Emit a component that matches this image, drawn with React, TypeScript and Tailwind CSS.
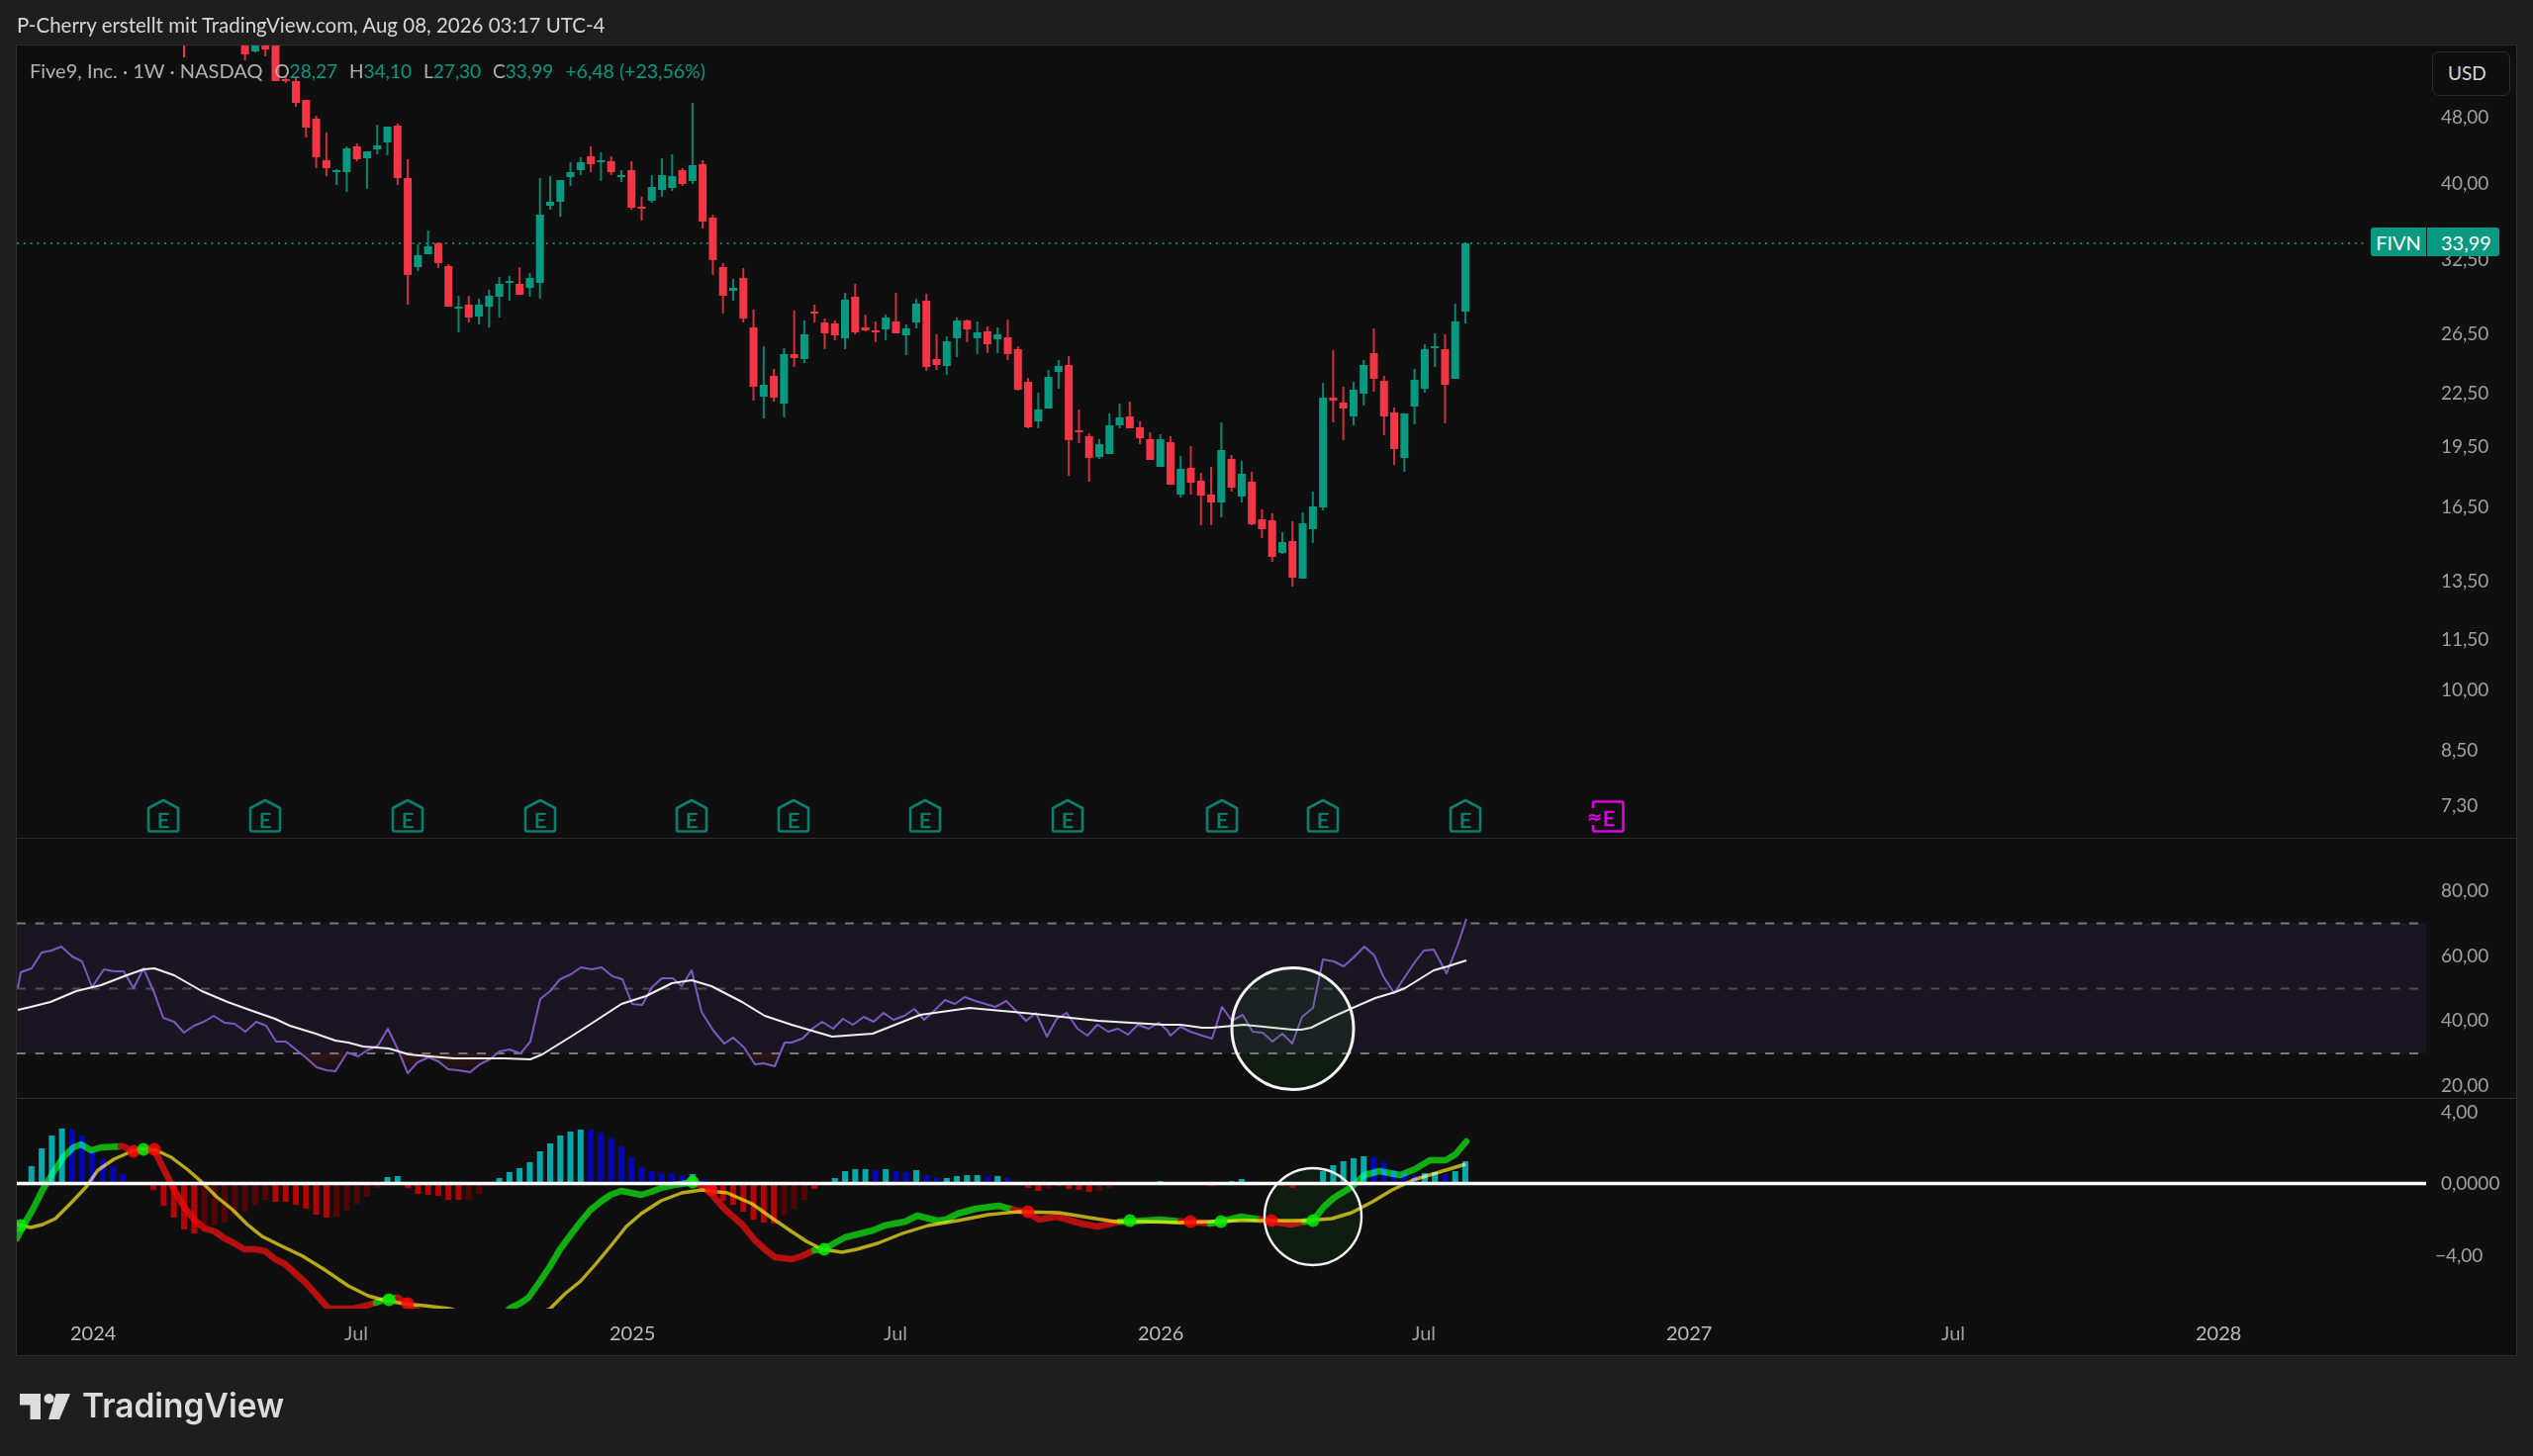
import React from 'react';

// candle x position, k = weeks back from the last bar
const barX = (k: number) => 1481 - 10.278 * k;

type Candle = [number, number, number, number, 'g' | 'r']; // high, body top, body bottom, low

const candles: Candle[] = [
  [245, 246, 315, 327, 'g'], [307, 325, 383, 383, 'g'], [338, 353, 389, 428, 'r'], [337, 350, 352, 371, 'g'],
  [348, 353, 393, 397, 'g'], [373, 384, 411, 429, 'g'], [418, 418, 463, 477, 'g'], [412, 417, 454, 470, 'r'],
  [380, 385, 421, 440, 'r'], [332, 357, 383, 396, 'r'], [364, 369, 398, 410, 'g'], [386, 394, 421, 430, 'g'],
  [391, 407, 413, 445, 'r'], [354, 402, 405, 427, 'r'], [387, 402, 513, 516, 'g'], [497, 512, 535, 549, 'g'],
  [518, 529, 585, 585, 'g'], [527, 547, 584, 593, 'r'], [538, 548, 559, 560, 'g'], [519, 526, 563, 568, 'r'],
  [515, 525, 535, 544, 'r'], [477, 487, 530, 531, 'r'], [466, 479, 502, 508, 'g'], [460, 464, 493, 497, 'r'],
  [427, 455, 508, 523, 'g'], [472, 500, 508, 531, 'r'], [478, 486, 501, 531, 'r'], [451, 473, 488, 500, 'r'],
  [461, 474, 500, 503, 'g'], [441, 447, 490, 490, 'r'], [439, 444, 472, 472, 'g'], [437, 444, 465, 465, 'r'],
  [426, 432, 443, 449, 'r'], [406, 421, 433, 433, 'r'], [408, 422, 430, 433, 'g'], [418, 430, 459, 459, 'g'],
  [444, 449, 462, 464, 'g'], [438, 441, 463, 487, 'r'], [414, 435, 437, 448, 'r'], [360, 369, 445, 481, 'r'],
  [364, 370, 376, 393, 'g'], [374, 381, 413, 413, 'g'], [397, 414, 426, 433, 'g'], [382, 386, 432, 433, 'r'],
  [350, 353, 394, 395, 'r'], [323, 341, 358, 364, 'r'], [331, 338, 343, 357, 'g'], [330, 335, 348, 357, 'r'],
  [325, 336, 342, 358, 'g'], [323, 324, 333, 346, 'r'], [321, 324, 342, 361, 'g'], [340, 345, 370, 379, 'g'],
  [338, 363, 369, 374, 'r'], [297, 304, 371, 375, 'r'], [302, 307, 326, 332, 'g'], [328, 332, 339, 359, 'g'],
  [296, 325, 337, 337, 'r'], [318, 321, 333, 344, 'g'], [325, 334, 335, 346, 'r'], [318, 331, 334, 335, 'r'],
  [287, 300, 336, 338, 'r'], [296, 303, 342, 353, 'g'], [324, 327, 339, 344, 'r'], [322, 326, 337, 353, 'r'],
  [308, 315, 317, 326, 'r'], [324, 338, 363, 367, 'g'], [314, 358, 362, 371, 'r'], [352, 358, 408, 422, 'g'],
  [373, 380, 402, 406, 'r'], [350, 389, 401, 423, 'g'], [313, 331, 391, 405, 'r'], [271, 281, 322, 326, 'r'],
  [282, 291, 294, 304, 'g'], [266, 270, 299, 317, 'r'], [217, 220, 263, 278, 'r'], [162, 166, 224, 231, 'r'],
  [104, 167, 183, 186, 'g'], [170, 172, 186, 188, 'r'], [156, 178, 190, 193, 'g'], [160, 177, 192, 199, 'g'],
  [177, 189, 203, 205, 'g'], [199, 209, 210, 223, 'r'], [163, 172, 210, 212, 'r'], [172, 177, 179, 184, 'g'],
  [158, 163, 174, 177, 'r'], [154, 162, 163, 183, 'g'], [148, 158, 166, 174, 'r'], [159, 164, 172, 177, 'g'],
  [164, 174, 179, 188, 'g'], [182, 182, 204, 219, 'g'], [178, 204, 208, 212, 'g'], [180, 217, 286, 302, 'g'],
  [276, 281, 291, 300, 'g'], [270, 287, 298, 298, 'r'], [279, 284, 285, 304, 'g'], [280, 287, 300, 321, 'g'],
  [293, 299, 310, 331, 'g'], [302, 308, 320, 328, 'g'], [299, 308, 321, 326, 'r'], [299, 310, 312, 336, 'g'],
  [267, 269, 310, 310, 'r'], [245, 246, 266, 271, 'r'], [233, 249, 257, 257, 'g'], [247, 258, 270, 274, 'g'],
  [161, 180, 278, 308, 'r'], [125, 127, 180, 187, 'r'], [128, 128, 144, 157, 'g'], [126, 147, 151, 156, 'g'],
  [153, 153, 160, 191, 'g'], [145, 148, 161, 163, 'r'], [148, 150, 174, 194, 'g'], [171, 172, 173, 187, 'g'],
  [134, 162, 170, 178, 'r'], [117, 120, 159, 170, 'r'], [101, 101, 129, 139, 'r'], [77, 82, 104, 108, 'r'],
  [77, 80, 81, 84, 'r'], [44, 44, 82, 82, 'r'], [44, 44, 50, 57, 'r'], [44, 44, 52, 53, 'g'], [44, 44, 55, 61, 'r'],
];

const priceTicks: [string, number][] = [
  ['48,00', 117], ['40,00', 184], ['32,50', 261], ['26,50', 336], ['22,50', 396], ['19,50', 450],
  ['16,50', 511], ['13,50', 586], ['11,50', 645], ['10,00', 696], ['8,50', 757], ['7,30', 813],
];

const earnings = [165, 268, 412, 546, 699, 802, 935, 1079, 1235, 1337, 1481];

const rsi =
  '18,999 21,983 32,979 42,963 52,961 62,957 73,967 83,972 93,998 105,980 115,982 125,982 135,999 145,979 156,1004 165,1029 176,1033 186,1044 196,1037 206,1033 216,1027 227,1034 237,1035 248,1043 259,1033 269,1037 279,1053 289,1053 299,1061 310,1070 320,1079 330,1082 339,1083 351,1064 362,1068 371,1062 382,1057 392,1040 403,1063 412,1085 422,1074 433,1069 443,1073 453,1081 463,1082 475,1084 485,1076 495,1071 505,1063 515,1061 526,1065 536,1053 546,1010 556,1002 566,990 577,985 587,978 598,980 608,978 619,987 629,990 639,1015 649,1016 659,998 669,989 680,989 689,997 699,981 709,1023 721,1042 732,1055 741,1049 752,1059 763,1076 772,1075 783,1078 793,1054 800,1054 811,1050 821,1040 831,1033 842,1040 852,1030 862,1036 873,1028 883,1033 893,1024 903,1031 914,1027 924,1020 934,1031 944,1022 955,1011 965,1015 975,1008 986,1012 996,1015 1006,1018 1017,1012 1027,1022 1037,1032 1047,1024 1058,1048 1068,1030 1078,1024 1089,1040 1099,1047 1109,1036 1120,1043 1130,1040 1140,1046 1150,1036 1161,1040 1171,1034 1180,1042 1183,1047 1193,1038 1203,1043 1215,1047 1225,1050 1235,1018 1245,1032 1256,1026 1266,1043 1276,1044 1286,1053 1296,1045 1306,1055 1316,1028 1327,1019 1337,970 1348,972 1358,977 1368,968 1379,957 1389,966 1398,987 1409,1004 1419,989 1429,974 1439,961 1449,960 1462,984 1473,956 1482,929';

const rsiMa =
  '18,1021 31,1018 51,1013 77,1002 102,996 128,986 145,980 156,979 176,986 204,1002 230,1013 255,1022 278,1030 293,1037 319,1045 339,1052 352,1054 367,1058 393,1060 413,1066 434,1068 459,1070 485,1070 510,1070 536,1071 548,1066 577,1048 602,1032 628,1015 653,1007 679,994 699,991 719,997 750,1013 773,1027 800,1036 841,1048 882,1045 930,1026 980,1019 1045,1025 1110,1032 1176,1036 1193,1036 1215,1039 1225,1039 1257,1036 1287,1039 1307,1041 1315,1041 1325,1039 1347,1028 1367,1019 1390,1009 1410,1003 1420,999 1449,981 1463,977 1482,971';

// part of the RSI under the 30 line
const rsiLowFills = [
  '304,1065 310,1070 320,1079 330,1082 339,1083 348,1065',
  '403,1065 412,1085 422,1074 433,1069 443,1073 453,1081 463,1082 475,1084 485,1076 495,1071 503,1065',
  '752,1065 763,1076 772,1075 783,1078 789,1065',
];

type Bar = [number, number, 'T' | 'B' | 'R' | 'D'];

const histValues: [number, string][] = [
  [141, '1179T 1161T 1148T 1141T 1142B 1148B 1164B 1172B 1179B 1187B'],
  [129, '1203R 1219R 1231R 1243R 1247R 1245D 1239D 1236D 1229D 1225D 1218D 1213D 1215R 1215R 1218R 1222R 1228R 1231R 1230D 1224D 1217D 1210D 1201D 1190T 1189T 1201R 1207R 1208R 1209R 1213R 1213R 1213D 1207D 1199D 1191T 1185T 1181T 1175T 1164T 1156T 1148T 1144T 1142T 1142B 1145B 1151B 1159B 1170B 1180B 1184B 1186B 1186B 1188B 1187T 1193B 1207R 1214R 1218R 1225R 1233R 1236R 1237R 1229D 1222D 1213D 1202R'],
  [62, '1191T 1184T 1182T 1182T 1183B 1182T 1184B 1185B 1183T 1188B 1191B 1191T 1189T 1188T 1188T 1189B 1189T 1191B'],
  [43, '1201R 1204R 1202D 1199R 1202R 1203R 1205R 1204D 1201D'],
  [30, '1194T'],
  [25, '1199R'],
  [23, '1194T 1192T 1194B'],
  [18, '1199R 1201R'],
  [14, '1184T 1178T 1174T 1171T 1169T 1170B 1175B 1183B 1186B 1188B 1186T 1185T 1187B 1184T 1174T'],
];

const histBars: Bar[] = histValues.flatMap(([start, list]) =>
  list.split(' ').map((v, i): Bar => [start - i, parseInt(v, 10), v.slice(-1) as Bar[2]])
);

const histColors = { T: 'fill-[#05a8ab]', B: 'fill-[#0505b4]', R: 'fill-[#b40404]', D: 'fill-[#520505]' };

const macdSegments: { color: 'g' | 'r'; points: string }[] = [
  { color: 'g', points: '17,1252 23,1240 33,1223 43,1203 54,1185 64,1170 74,1160 82,1157 92,1163 102,1160 122,1159' },
  { color: 'r', points: '122,1159 125,1159 135,1165 145,1163 156,1163 166,1183 176,1203 186,1220 196,1233 207,1242 217,1245 227,1252 237,1257 247,1263 258,1263 268,1265 278,1273 288,1278 298,1287 309,1297 319,1308 332,1323 357,1323 370,1320 380,1317' },
  { color: 'g', points: '380,1317 392,1313 402,1312' },
  { color: 'r', points: '402,1312 412,1318 434,1333 500,1345' },
  { color: 'g', points: '500,1340 515,1323 525,1318 534,1312 546,1295 556,1280 566,1263 577,1248 587,1235 597,1223 607,1215 617,1208 628,1204 648,1208 658,1205 668,1201 681,1198 689,1197 700,1195' },
  { color: 'r', points: '700,1195 712,1200 719,1207 732,1222 750,1238 763,1254 773,1263 783,1271 800,1273 810,1270 823,1264' },
  { color: 'g', points: '823,1264 833,1263 843,1257 854,1251 866,1248 882,1244 894,1239 915,1235 927,1229 947,1234 956,1233 968,1227 986,1222 1009,1219 1024,1223' },
  { color: 'r', points: '1024,1223 1039,1226 1050,1233 1068,1230 1093,1237 1109,1240 1132,1235' },
  { color: 'g', points: '1132,1235 1142,1235 1172,1233 1193,1235' },
  { color: 'r', points: '1193,1235 1203,1235 1223,1237' },
  { color: 'g', points: '1223,1237 1234,1235 1254,1230 1274,1233' },
  { color: 'r', points: '1274,1233 1285,1235 1305,1238 1318,1235' },
  { color: 'g', points: '1318,1235 1327,1234 1338,1220 1348,1211 1366,1200 1379,1188 1394,1184 1415,1188 1430,1182 1445,1173 1461,1173 1471,1167 1482,1154' },
];

const macdSignal =
  '17,1238 31,1241 43,1238 56,1232 71,1217 87,1200 99,1183 115,1172 133,1164 145,1161 158,1163 173,1170 189,1182 204,1195 219,1210 235,1223 250,1238 265,1250 281,1258 306,1270 327,1283 352,1300 372,1310 390,1315 408,1318 429,1320 454,1323 480,1330 540,1330 556,1323 571,1308 587,1295 602,1278 617,1260 633,1240 648,1227 668,1214 689,1206 709,1203 735,1206 760,1217 781,1232 800,1245 815,1255 831,1263 851,1266 866,1263 887,1257 912,1247 938,1239 968,1234 999,1228 1030,1225 1070,1226 1101,1231 1127,1235 1157,1235 1193,1236 1223,1235 1254,1234 1285,1234 1320,1234 1346,1232 1366,1226 1387,1215 1407,1203 1428,1193 1448,1187 1481,1177';

const crossDots: [number, number, 'g' | 'r'][] = [
  [21, 1239, 'g'], [135, 1164, 'r'], [145, 1162, 'g'], [156, 1162, 'r'], [393, 1314, 'g'], [412, 1318, 'r'],
  [700, 1195, 'g'], [719, 1203, 'r'], [833, 1263, 'g'], [1039, 1225, 'r'], [1142, 1234, 'g'], [1203, 1235, 'r'],
  [1234, 1235, 'g'], [1285, 1234, 'r'], [1327, 1234, 'g'],
];

const timeLabels: { label: string; left: number; year: boolean }[] = [
  { label: '2024', left: 71, year: true },
  { label: 'Jul', left: 348, year: false },
  { label: '2025', left: 616, year: true },
  { label: 'Jul', left: 893, year: false },
  { label: '2026', left: 1150, year: true },
  { label: 'Jul', left: 1427, year: false },
  { label: '2027', left: 1684, year: true },
  { label: 'Jul', left: 1962, year: false },
  { label: '2028', left: 2219, year: true },
];

const AxisText = ({ x = 2467, y, children }: { x?: number; y: number; children: React.ReactNode }) => (
  <text x={x} y={y} dominantBaseline="central" className="fill-[#a0a0a0] text-[19px]">
    {children}
  </text>
);

const EarningsFlag = ({ x }: { x: number }) => (
  <g>
    <path
      d={`M${x - 15} 817 L${x} 809 L${x + 15} 817 V839 a1.5 1.5 0 0 1 -1.5 1.5 H${x - 13.5} a1.5 1.5 0 0 1 -1.5 -1.5 Z`}
      fill="#0f0f0f"
      stroke="#0b7f6c"
      strokeWidth="2.6"
      strokeLinejoin="round"
    />
    <text
      x={x}
      y={828}
      textAnchor="middle"
      dominantBaseline="central"
      stroke="#0b7f6c"
      strokeWidth="0.7"
      className="fill-[#0b7f6c] text-[21px]"
    >
      E
    </text>
  </g>
);

const MainPane = () => (
  <svg viewBox="17 46 2526 801" className="block h-[801px] w-[2526px]">
    <line x1="17" x2="2392" y1="246" y2="246" stroke="#089981" strokeWidth="2" strokeDasharray="2 4.77" opacity="0.85" />
    {priceTicks.map(([label, y]) => (
      <AxisText key={label} y={y}>
        {label}
      </AxisText>
    ))}
    <rect x={barX(126) - 1} y="44" width="2" height="14" className="fill-[#f23645]" />
    {candles.map(([high, top, bottom, low, dir], k) => {
      const x = barX(k);
      const fill = dir === 'g' ? 'fill-[#089981]' : 'fill-[#f23645]';
      return (
        <g key={k} className={fill}>
          <rect x={x - 1} y={high} width="2" height={low - high} opacity="0.85" />
          <rect x={x - 4} y={top} width="8" height={Math.max(bottom - top, 2)} />
        </g>
      );
    })}
    {earnings.map((x) => (
      <EarningsFlag key={x} x={x} />
    ))}
    <path
      d="M1610 817 V812 a1.5 1.5 0 0 1 1.5 -1.5 H1639 a1.5 1.5 0 0 1 1.5 1.5 V839 a1.5 1.5 0 0 1 -1.5 1.5 H1611.5 a1.5 1.5 0 0 1 -1.5 -1.5 V834"
      fill="none"
      stroke="#e000e6"
      strokeWidth="2.6"
    />
    <text
      x="1611.5"
      y="825"
      textAnchor="middle"
      dominantBaseline="central"
      stroke="#e000e6"
      strokeWidth="0.6"
      className="fill-[#e000e6] font-['DejaVu_Sans',sans-serif] text-[18px]"
    >
      ≈
    </text>
    <text
      x="1626"
      y="826"
      textAnchor="middle"
      dominantBaseline="central"
      stroke="#e000e6"
      strokeWidth="0.7"
      className="fill-[#e000e6] text-[21px]"
    >
      E
    </text>
  </svg>
);

const RsiPane = () => (
  <svg viewBox="17 848 2526 262" className="block h-[262px] w-[2526px]">
    <defs>
      <linearGradient id="rsiLow" x1="0" x2="0" y1="0" y2="1">
        <stop offset="0" stopColor="#f23645" stopOpacity="0.16" />
        <stop offset="1" stopColor="#f23645" stopOpacity="0.02" />
      </linearGradient>
    </defs>
    <rect x="17" y="933" width="2435" height="132" fill="#1a1621" />
    <line x1="17" x2="2452" y1="933.5" y2="933.5" stroke="#787878" strokeWidth="2" strokeDasharray="9 9.6" />
    <line x1="17" x2="2452" y1="999.5" y2="999.5" stroke="#4e4e50" strokeWidth="2" strokeDasharray="9 9.6" />
    <line x1="17" x2="2452" y1="1065" y2="1065" stroke="#787878" strokeWidth="2" strokeDasharray="9 9.6" />
    {rsiLowFills.map((points) => (
      <polygon key={points} points={points} fill="url(#rsiLow)" />
    ))}
    <polyline points={rsi} fill="none" stroke="#7e57c2" strokeWidth="2" strokeLinejoin="round" />
    <polyline points={rsiMa} fill="none" stroke="#f0f0f0" strokeWidth="2" strokeLinejoin="round" />
    <circle cx="1306.5" cy="1040" r="61.5" fill="#1fa82e" fillOpacity="0.09" stroke="#f4f4f4" strokeWidth="3" />
    <AxisText y={899}>80,00</AxisText>
    <AxisText y={965}>60,00</AxisText>
    <AxisText y={1030}>40,00</AxisText>
    <AxisText y={1096}>20,00</AxisText>
  </svg>
);

const MacdPane = () => (
  <svg viewBox="17 1111 2526 212" className="block h-[212px] w-[2526px]">
    {histBars.map(([k, y, kind]) => (
      <rect
        key={k}
        x={barX(k) - 3}
        y={Math.min(y, 1196)}
        width="6"
        height={Math.abs(y - 1196)}
        className={histColors[kind]}
      />
    ))}
    <circle cx="1327" cy="1230" r="49" fill="#1fa82e" fillOpacity="0.09" stroke="#f4f4f4" strokeWidth="2.4" />
    <g className="mix-blend-screen">
      {macdSegments.map((seg) => (
        <polyline
          key={seg.points}
          points={seg.points}
          fill="none"
          stroke={seg.color === 'g' ? '#00a800' : '#b00000'}
          strokeWidth="6.5"
          strokeLinejoin="round"
          strokeLinecap="round"
        />
      ))}
    </g>
    <polyline
      points={macdSignal}
      fill="none"
      stroke="#b3a40a"
      strokeWidth="3.4"
      strokeLinejoin="round"
      className="mix-blend-screen"
    />
    {crossDots.map(([cx, cy, c]) => (
      <circle key={cx} cx={cx} cy={cy} r="6.5" fill={c === 'g' ? '#08e808' : '#f40808'} fillOpacity="0.85" />
    ))}
    <line x1="17" x2="2452" y1="1196.5" y2="1196.5" stroke="#ffffff" strokeWidth="3.6" />
    <AxisText y={1123}>4,00</AxisText>
    <AxisText y={1195}>0,0000</AxisText>
    <AxisText x={2461} y={1268}>
      −4,00
    </AxisText>
  </svg>
);

const TimeAxis = () => (
  <div className="relative h-[47px]">
    {timeLabels.map(({ label, left, year }) => (
      <span
        key={left}
        className={`absolute top-[12px] text-[20px] leading-[24px] ${year ? 'text-[#bcbcbc]' : 'text-[#a0a0a0]'}`}
        style={{ left: left - 17 }}
      >
        {label}
      </span>
    ))}
  </div>
);

export default function App() {
  return (
    <div className="flex h-[1472px] w-[2560px] flex-col bg-[#1e1e1e] font-['Lato',sans-serif] text-[#d6d6d6]">
      <div className="flex h-[45px] items-center pl-[17px] pt-[5px] text-[20.5px] leading-none">
        P-Cherry erstellt mit TradingView.com, Aug 08, 2026 03:17 UTC-4
      </div>

      <div className="relative ml-[16px] w-[2528px] border border-[#2e2e2e] bg-[#0f0f0f]">
        <MainPane />
        <div className="h-px bg-[#2e2e2e]" />
        <RsiPane />
        <div className="h-px bg-[#2e2e2e]" />
        <MacdPane />
        <TimeAxis />

        <div className="absolute left-[13px] top-[13px] flex items-baseline text-[19px] leading-[24px] text-[#b2b2b2]">
          <span className="text-[20px]">Five9, Inc. · 1W · NASDAQ</span>
          <span className="ml-[12px]">O</span>
          <span className="text-[#089981]">28,27</span>
          <span className="ml-[12px]">H</span>
          <span className="text-[#089981]">34,10</span>
          <span className="ml-[12px]">L</span>
          <span className="text-[#089981]">27,30</span>
          <span className="ml-[12px]">C</span>
          <span className="text-[#089981]">33,99</span>
          <span className="ml-[12px] text-[19.5px] text-[#089981]">+6,48 (+23,56%)</span>
        </div>

        <div className="absolute left-[2441px] top-[6px] flex h-[45px] w-[79px] items-center rounded-[7px] border border-[#2e2e2e] bg-[#0f0f0f] pl-[15px] text-[19px] text-[#d6d6d6]">
          USD
        </div>

        <div className="absolute left-[2379px] top-[184px] flex h-[29px] text-[20px] text-white">
          <span className="flex w-[56px] items-center justify-center rounded-l-[3px] bg-[#089981]">FIVN</span>
          <span className="ml-[1px] flex w-[73px] items-center rounded-r-[3px] bg-[#089981] pl-[14px]">33,99</span>
        </div>
      </div>

      <div className="flex flex-1 items-center gap-[12px] pl-[20px]">
        <svg viewBox="0 0 51 26" className="h-[26px] w-[51px]" fill="#dcdcdc">
          <path d="M0 0 H21 V26 H10.5 V11.5 H0 Z" />
          <circle cx="29.5" cy="5" r="5" />
          <path d="M36.5 0 H51 L40 26 H29 Z" />
        </svg>
        <span className="font-['Inter',sans-serif] text-[33.5px] font-semibold leading-none text-[#dcdcdc]">
          TradingView
        </span>
      </div>
    </div>
  );
}
